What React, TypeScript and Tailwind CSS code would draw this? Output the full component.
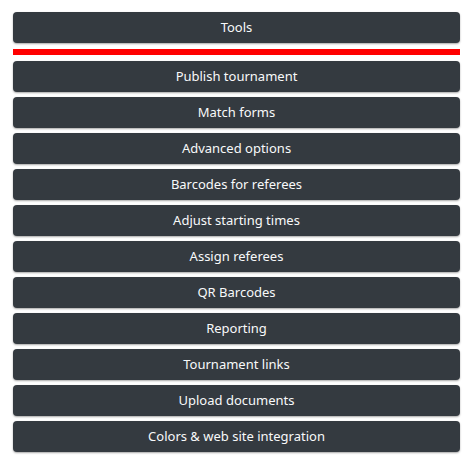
const items = [
  'Publish tournament',
  'Match forms',
  'Advanced options',
  'Barcodes for referees',
  'Adjust starting times',
  'Assign referees',
  'QR Barcodes',
  'Reporting',
  'Tournament links',
  'Upload documents',
  'Colors & web site integration',
];

function MenuButton({ label }: { label: string }) {
  return (
    <button
      type="button"
      className="flex h-[31px] w-full items-center justify-center rounded-[4px] bg-[#343a40] pt-px text-[13px] text-[#f8f9fa] shadow-[0_1px_2px_rgba(0,0,0,0.35)]"
    >
      {label}
    </button>
  );
}

export default function App() {
  return (
    <div className="min-h-[465px] w-[473px] bg-white px-[13px] pt-[12px] font-['Noto_Sans',sans-serif]">
      <MenuButton label="Tools" />
      <div className="mt-[6px] h-[6px] w-full bg-[#ff0000]" />
      <div className="mt-[6px] flex flex-col gap-[5px]">
        {items.map((item) => (
          <MenuButton key={item} label={item} />
        ))}
      </div>
    </div>
  );
}
